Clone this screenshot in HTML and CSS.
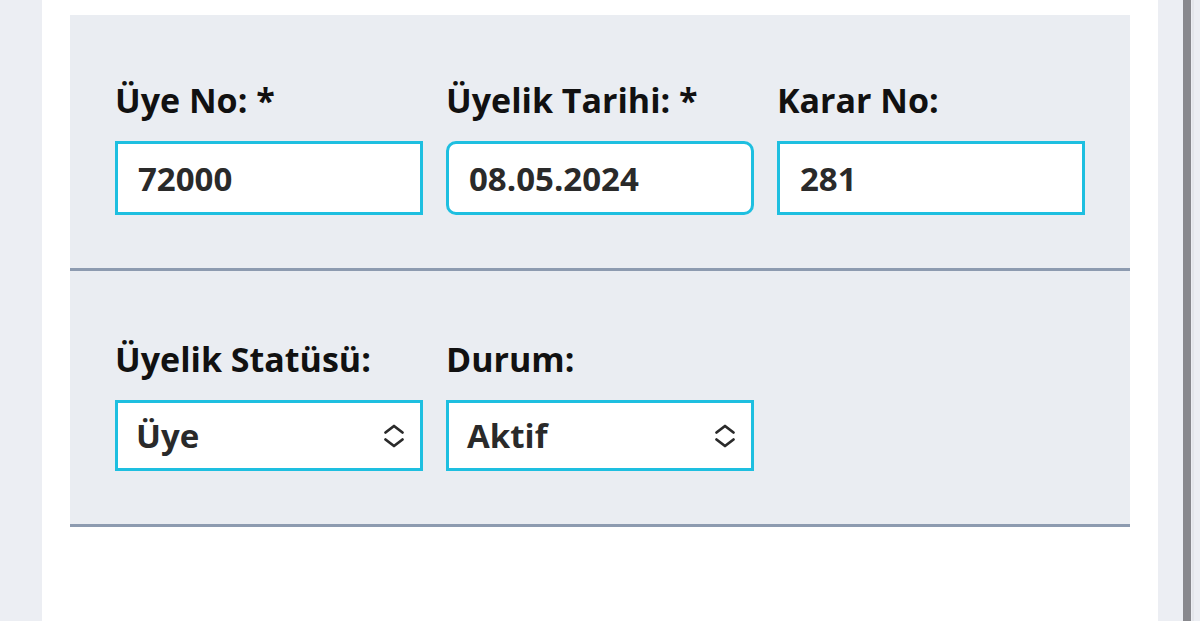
FILE: index.html
```html
<!DOCTYPE html>
<html lang="tr">

<head>
    <meta charset="UTF-8">
    <meta name="viewport" content="width=device-width, initial-scale=1.0">
    <title>Üye Bilgileri</title>
    <link rel="stylesheet" href="styles.css">
</head>

<body>
    <div class="gutter"></div>

    <div class="card">
        <div class="panel">

            <!-- Üyelik bilgileri -->
            <div class="section">
                <div class="row">
                    <div class="field">
                        <label for="uyeNo">Üye No: *</label>
                        <input id="uyeNo" class="box" type="text" value="72000">
                    </div>
                    <div class="field">
                        <label for="tarih">Üyelik Tarihi: *</label>
                        <input id="tarih" class="box rounded" type="text" value="08.05.2024">
                    </div>
                    <div class="field">
                        <label for="karar">Karar No:</label>
                        <input id="karar" class="box" type="text" value="281">
                    </div>
                </div>
            </div>

            <!-- Statü / Durum -->
            <div class="section second">
                <div class="row">
                    <div class="field">
                        <label for="statu">Üyelik Statüsü:</label>
                        <div class="box select" id="statu">
                            <span>Üye</span>
                            <svg width="22" height="24" viewBox="0 0 22 24" fill="none" stroke="#2a2a2a" stroke-width="2.8" stroke-linecap="round" stroke-linejoin="round">
                                <polyline points="2.5,8.5 11,2 19.5,8.5" />
                                <polyline points="2.5,15.5 11,22 19.5,15.5" />
                            </svg>
                        </div>
                    </div>
                    <div class="field">
                        <label for="durum">Durum:</label>
                        <div class="box select" id="durum">
                            <span>Aktif</span>
                            <svg width="22" height="24" viewBox="0 0 22 24" fill="none" stroke="#2a2a2a" stroke-width="2.8" stroke-linecap="round" stroke-linejoin="round">
                                <polyline points="2.5,8.5 11,2 19.5,8.5" />
                                <polyline points="2.5,15.5 11,22 19.5,15.5" />
                            </svg>
                        </div>
                    </div>
                </div>
            </div>

        </div>
    </div>

    <div class="scroll">
        <div class="thumb"></div>
        <div class="edge"></div>
    </div>
</body>

</html>
```

FILE: styles.css
```css
body {
    margin: 0;
    height: 100vh;
    overflow: hidden;
    display: flex;
    background: #eceef3;
    font-family: "Open Sans", Lato, sans-serif;
    font-variant-ligatures: none;
    color: #111;
}

.gutter {
    width: 42px;
}

.card {
    width: 1116px;
    background: #fff;
    padding: 15px 28px 0;
    box-sizing: border-box;
}

.panel {
    background: #eaedf2;
}

.section {
    height: 256px;
    padding: 69px 0 0 45px;
    box-sizing: border-box;
    border-bottom: 3px solid #8d9bb0;
}

.second {
    padding-top: 72px;
}

.row {
    display: grid;
    grid-template-columns: repeat(3, 308px);
    gap: 23px;
}

.field {
    display: flex;
    flex-direction: column;
}

label {
    font-size: 34px;
    font-weight: 700;
    line-height: 32px;
    margin-bottom: 25px;
}

.box {
    height: 74px;
    box-sizing: border-box;
    border: 3px solid #1ebfe0;
    background: #fff;
    padding: 0 20px;
    font-family: inherit;
    font-size: 33px;
    font-weight: 700;
    color: #2a2a2a;
    outline: none;
}

.rounded {
    border-radius: 10px;
}

.select {
    height: 71px;
    display: flex;
    align-items: center;
    justify-content: space-between;
    padding: 0 15px 0 18px;
}

.scroll {
    width: 42px;
    display: flex;
    padding-left: 25px;
    box-sizing: border-box;
}

.thumb {
    width: 8px;
    background: #88888d;
}

.edge {
    width: 2px;
    margin-left: 1px;
    background: #e4e6eb;
}
```
